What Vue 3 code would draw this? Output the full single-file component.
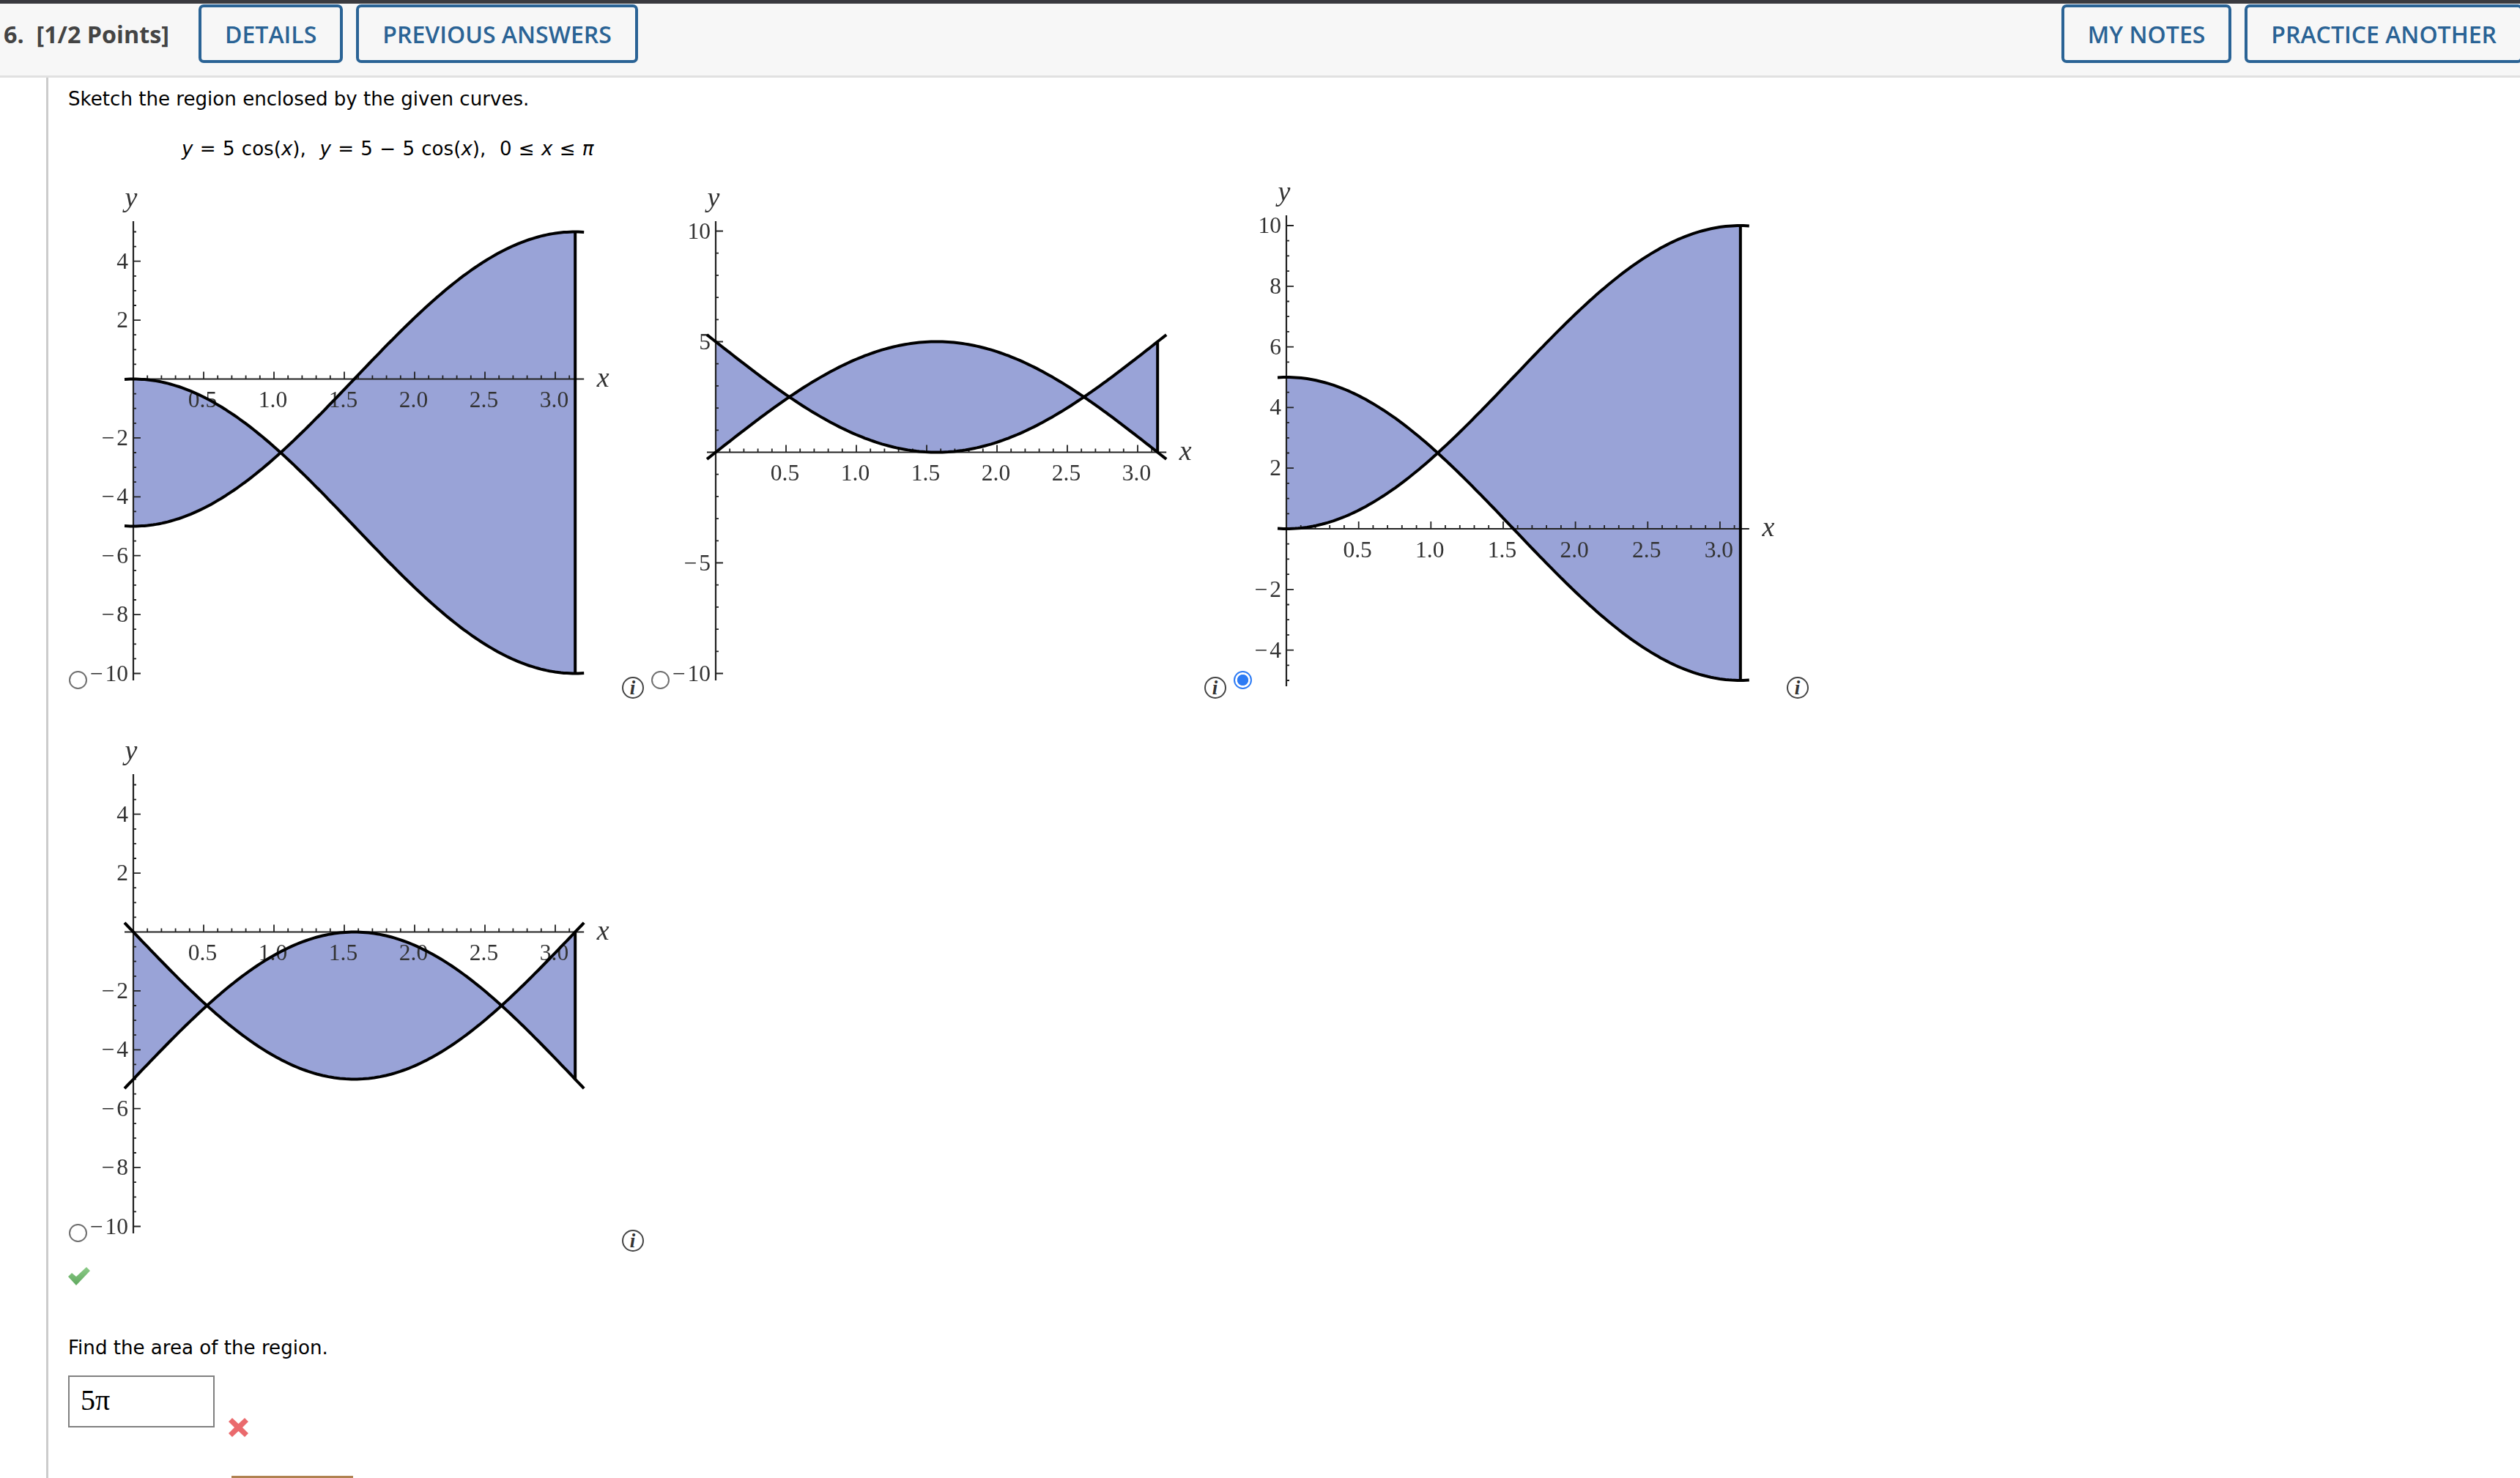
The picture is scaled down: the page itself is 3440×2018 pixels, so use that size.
<template>
  <div class="page">
    <header class="question-bar">
      <span class="question-title">6.&nbsp; [1/2 Points]</span>
      <button class="bar-btn">DETAILS</button>
      <button class="bar-btn">PREVIOUS ANSWERS</button>
      <button class="bar-btn push-right">MY NOTES</button>
      <button class="bar-btn last">PRACTICE ANOTHER</button>
    </header>

    <main class="content">
      <p class="prompt">Sketch the region enclosed by the given curves.</p>
      <p class="formula">
        <i>y</i> = 5 cos(<i>x</i>),&nbsp; <i>y</i> = 5 − 5 cos(<i>x</i>),&nbsp; 0 ≤ <i>x</i> ≤ <i>π</i>
      </p>

      <div class="options">
        <div v-for="plot in plots" :key="plot.id" class="option">
          <input class="radio" type="radio" name="region" :checked="plot.selected" />
          <svg class="plot" width="729" height="712" viewBox="0 -12 729 712">
            <path :d="plot.fill" fill="#99a3d7" />
            <path :d="plot.ticks" class="tick" />
            <path :d="plot.axes" class="axis" />
            <text
              v-for="label in plot.xLabels"
              :key="label.text"
              class="num"
              text-anchor="middle"
              :x="label.x"
              :y="label.y"
            >{{ label.text }}</text>
            <text
              v-for="label in plot.yLabels"
              :key="label.text"
              class="num"
              text-anchor="end"
              :x="label.x"
              :y="label.y"
            >{{ label.text }}</text>
            <text class="var" :x="plot.yName.x" :y="plot.yName.y" text-anchor="middle">y</text>
            <text class="var" :x="plot.xName.x" :y="plot.xName.y" text-anchor="middle">x</text>
            <path :d="plot.curveA" class="curve" />
            <path :d="plot.curveB" class="curve" />
            <path :d="plot.edge" class="curve" :stroke-width="plot.edgeWidth" />
          </svg>
          <svg class="info" width="30" height="30" viewBox="0 0 30 30">
            <circle cx="15" cy="15" r="14" fill="none" stroke="#444" stroke-width="2" />
            <text x="14.5" y="24" text-anchor="middle" class="info-i">i</text>
          </svg>
        </div>
      </div>

      <svg class="check" width="30" height="25" viewBox="0 0 30 25">
        <defs>
          <linearGradient id="check-green" x1="0" y1="0" x2="0" y2="1">
            <stop offset="0" stop-color="#8ccb88" />
            <stop offset="1" stop-color="#5fa85e" />
          </linearGradient>
        </defs>
        <path d="M0 13 L5 8 L11 13 L25 0 L30 5 L11 25 Z" fill="url(#check-green)" />
      </svg>

      <p class="prompt find">Find the area of the region.</p>
      <div class="answer-row">
        <div class="answer-box">5π</div>
        <svg class="cross" width="27" height="28" viewBox="0 0 27 28">
          <path d="M5 1 L13.5 9 L22 1 L27 6 L19 14 L27 22 L22 27 L13.5 19 L5 27 L0 22 L8 14 L0 6 Z" fill="#ea6a6d" />
        </svg>
      </div>
      <div class="submit"></div>
    </main>
  </div>
</template>

<script setup>
const sin = Math.sin
const cos = Math.cos

// one entry per answer choice, pixel scales read off the reference
const defs = [
  {
    id: 'a',
    x0: 62,
    ux: 192,
    y0: 267.5,
    uy: 40.2,
    top: 52,
    bottom: 679,
    tail: 12,
    f: (x) => -5 + 5 * cos(x),
    g: (x) => -5 * cos(x),
    major: [4, 2, -2, -4, -6, -8, -10],
    minorStep: 0.5,
    yMax: 5,
    yMin: -10,
    labelY: 296,
    edgeWidth: 4
  },
  {
    id: 'b',
    x0: 62,
    ux: 192,
    y0: 367.5,
    uy: 30.2,
    top: 52,
    bottom: 679,
    tail: 12,
    f: (x) => 5 * sin(x),
    g: (x) => 5 - 5 * sin(x),
    major: [10, 5, -5, -10],
    minorStep: 1,
    yMax: 10,
    yMin: -10,
    labelY: 396,
    edgeWidth: 4
  },
  {
    id: 'c',
    x0: 46,
    ux: 197.3,
    y0: 472,
    uy: 41.4,
    top: 44,
    bottom: 687,
    tail: 12,
    f: (x) => 5 * cos(x),
    g: (x) => 5 - 5 * cos(x),
    major: [10, 8, 6, 4, 2, -2, -4],
    minorStep: 0.5,
    yMax: 10,
    yMin: -5,
    labelY: 501,
    edgeWidth: 4,
    selected: true
  },
  {
    id: 'd',
    x0: 62,
    ux: 192,
    y0: 267.5,
    uy: 40.2,
    top: 52,
    bottom: 679,
    tail: 12,
    f: (x) => -5 * sin(x),
    g: (x) => -5 + 5 * sin(x),
    major: [4, 2, -2, -4, -6, -8, -10],
    minorStep: 0.5,
    yMax: 5,
    yMin: -10,
    labelY: 296,
    edgeWidth: 2.8
  }
]

const buildPlot = (d) => {
  const px = (x) => d.x0 + x * d.ux
  const py = (y) => d.y0 - y * d.uy
  const right = px(Math.PI)
  const xFrom = -d.tail / d.ux
  const xTo = Math.PI + d.tail / d.ux

  const sample = (fn, a, b) => {
    const pts = []
    for (let i = 0; i <= 160; i++) {
      const x = a + ((b - a) * i) / 160
      pts.push(`${px(x).toFixed(1)} ${py(fn(x)).toFixed(1)}`)
    }
    return pts
  }

  let ticks = ''
  for (let i = 1; i <= 31; i++) {
    const len = i % 5 === 0 ? 10 : 5
    ticks += `M${px(i / 10).toFixed(1)} ${d.y0}v${-len}`
  }
  const steps = Math.round((d.yMax - d.yMin) / d.minorStep)
  for (let i = 0; i <= steps; i++) {
    const v = d.yMin + i * d.minorStep
    if (v !== 0) ticks += `M${d.x0} ${py(v).toFixed(1)}h${d.major.includes(v) ? 10 : 4}`
  }

  const xLabels = [0.5, 1, 1.5, 2, 2.5, 3].map((v) => ({
    text: v.toFixed(1),
    x: px(v) - 1.5,
    y: d.labelY + 10
  }))
  const yLabels = d.major.map((v) => ({
    text: v < 0 ? `−\u200a${-v}` : `${v}`,
    x: d.x0 - 7,
    y: py(v) + 10
  }))

  return {
    id: d.id,
    selected: !!d.selected,
    edgeWidth: d.edgeWidth,
    fill: `M${sample(d.f, 0, Math.PI).join('L')}L${sample(d.g, 0, Math.PI).reverse().join('L')}Z`,
    curveA: `M${sample(d.f, xFrom, xTo).join('L')}`,
    curveB: `M${sample(d.g, xFrom, xTo).join('L')}`,
    edge: `M${right} ${py(d.f(Math.PI))}L${right} ${py(d.g(Math.PI))}`,
    axes: `M${d.x0} ${d.top}V${d.bottom}M${d.x0 - d.tail} ${d.y0}H${right + d.tail}`,
    ticks,
    xLabels,
    yLabels,
    yName: { x: d.x0 - 3, y: d.top - 20 },
    xName: { x: right + 38, y: d.y0 + 10 }
  }
}

const plots = defs.map(buildPlot)
</script>

<style scoped>
.page {
  height: 2018px;
  overflow: hidden;
  background: #fff;
  font-family: "DejaVu Sans", sans-serif;
  color: #111;
}

.question-bar {
  display: flex;
  align-items: flex-start;
  box-sizing: border-box;
  height: 106px;
  padding: 1px 0 0 5px;
  gap: 18px;
  background: #f7f7f7;
  border-top: 5px solid #3a3a3f;
  border-bottom: 3px solid #e1e1e1;
  font-family: "Open Sans", sans-serif;
}

.question-title {
  width: 248px;
  font-size: 32.3px;
  font-weight: 700;
  line-height: 80px;
  color: #444;
  white-space: nowrap;
}

.bar-btn {
  box-sizing: border-box;
  height: 80px;
  padding: 0 32px;
  border: 4px solid #2a6395;
  border-radius: 7px;
  background: #f7f7f7;
  color: #2a6395;
  font-family: "Open Sans", sans-serif;
  font-size: 32px;
  font-weight: 600;
  white-space: nowrap;
}

.push-right {
  margin-left: auto;
}

.last {
  margin-right: -4px;
}

.content {
  box-sizing: border-box;
  height: 1912px;
  margin-left: 63px;
  padding: 9px 0 0 27px;
  border-left: 3px solid #ccc;
}

.prompt {
  margin: 0;
  font-size: 26.1px;
  line-height: 40px;
  color: #000;
}

.formula {
  margin: 28px 0 15px 155px;
  font-size: 26.1px;
  line-height: 40px;
  word-spacing: 1px;
  color: #000;
}

.options {
  display: grid;
  grid-template-columns: repeat(3, 795px);
  row-gap: 43px;
}

.option {
  display: flex;
  align-items: flex-end;
  height: 712px;
}

.radio {
  appearance: none;
  box-sizing: border-box;
  flex: none;
  width: 25px;
  height: 25px;
  margin: 0 1px 9px;
  border: 2px solid #6e6e6e;
  border-radius: 50%;
  background: #fff;
}

.radio:checked {
  border: 2.5px solid #2d7bf4;
  background: radial-gradient(circle, #2d7bf4 0 7.2px, #fff 8px);
}

.plot {
  flex: none;
  display: block;
  filter: blur(0.35px);
}

.info {
  flex: none;
  margin-bottom: -4px;
}

.info-i {
  font-family: "Liberation Serif", serif;
  font-size: 27px;
  font-style: italic;
  font-weight: 700;
  fill: #333;
}

.axis {
  fill: none;
  stroke: #222;
  stroke-width: 2.2;
}

.tick {
  fill: none;
  stroke: #222;
  stroke-width: 1.8;
}

.curve {
  fill: none;
  stroke: #000;
  stroke-width: 4;
}

.num {
  font-family: "Liberation Serif", serif;
  font-size: 31.5px;
  fill: #333;
}

.var {
  font-family: "Liberation Serif", serif;
  font-size: 38px;
  font-style: italic;
  fill: #333;
}

.check {
  display: block;
  margin: 25px 0 65px;
}

.find {
  margin: 0;
}

.answer-row {
  display: flex;
  align-items: flex-end;
  gap: 19px;
  margin-top: 18px;
}

.answer-box {
  box-sizing: border-box;
  width: 200px;
  height: 71px;
  padding-left: 15px;
  border: 2px solid #808080;
  font-family: "Liberation Serif", serif;
  font-size: 40px;
  line-height: 63px;
  color: #000;
}

.cross {
  margin-bottom: -14px;
}

.submit {
  box-sizing: border-box;
  width: 166px;
  height: 50px;
  margin: 66px 0 0 223px;
  border: 3px solid #b08251;
  background: #f5efe8;
}
</style>
